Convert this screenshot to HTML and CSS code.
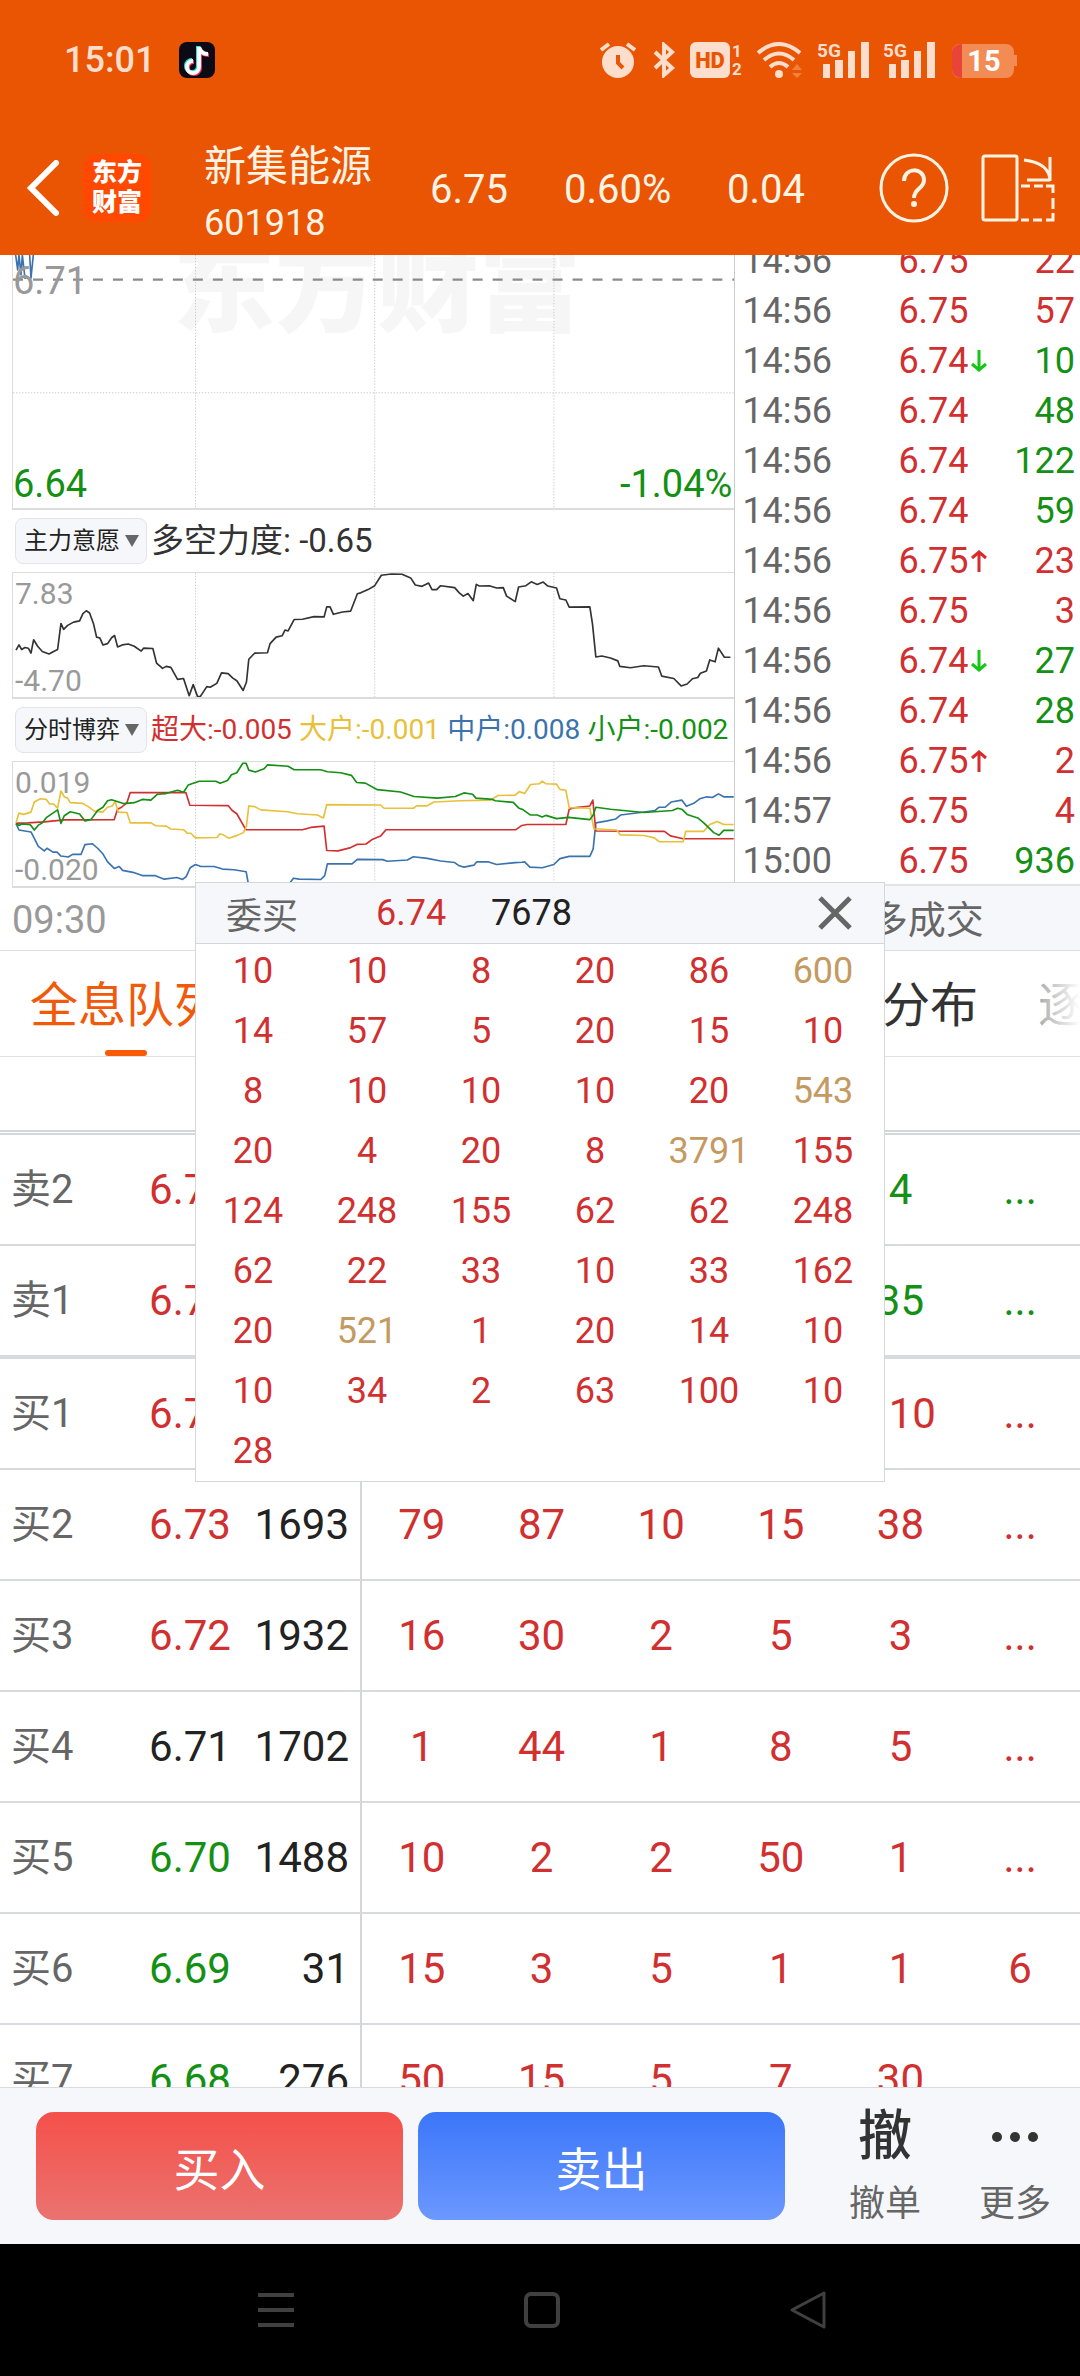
FILE: index.html
```
<!DOCTYPE html>
<html lang="zh">
<head>
    <meta charset="UTF-8">
    <meta name="viewport" content="width=device-width, initial-scale=1.0">
    <title>新集能源 601918</title>
    <link rel="stylesheet" href="styles.css">
</head>
<body>
    <header class="top">
        <div class="status-bar">
            <span class="clock">15:01</span>
            <svg class="app-icon" width="36" height="36" viewBox="0 0 36 36">
                <rect width="36" height="36" rx="8" fill="#0c0a14"/>
                <g fill="none" stroke-width="4">
                    <path d="M19 4v20a6 6 0 1 1-6-6M19 5c1 4 4 7 9 7" stroke="#25e5e0"/>
                    <path d="M21 6v20a6 6 0 1 1-6-6M21 7c1 4 4 6 9 6" stroke="#f3335b"/>
                    <path d="M20 5v20a6 6 0 1 1-6-6M20 5c1 4 4 7 9 7" stroke="#fff"/>
                </g>
            </svg>
            <div class="status-icons">
                <!-- 闹钟 -->
                <svg width="36" height="36" viewBox="0 0 36 36">
                    <circle cx="18" cy="20" r="16" fill="#fdddcb"/>
                    <path d="M1 8l8-6M35 8l-8-6" stroke="#fdddcb" stroke-width="4"/>
                    <path d="M18 13v8l5 5" fill="none" stroke="#ea5504" stroke-width="4"/>
                </svg>
                <!-- 蓝牙 -->
                <svg class="ml18" width="22" height="36" viewBox="0 0 22 36">
                    <path d="M2 10l17 16-8 7V3l8 7L2 26" fill="none" stroke="#fdddcb" stroke-width="4"/>
                </svg>
                <svg class="ml15" width="52" height="36" viewBox="0 0 52 36">
                    <rect width="40" height="36" rx="6" fill="#fdddcb"/>
                    <text x="20" y="26" text-anchor="middle" font-size="22" font-weight="900" fill="#ea5504">HD</text>
                    <text x="47" y="15" text-anchor="middle" font-size="17" font-weight="700" fill="#fdddcb">1</text>
                    <text x="47" y="33" text-anchor="middle" font-size="17" font-weight="700" fill="#fdddcb">2</text>
                </svg>
                <!-- 无线网 -->
                <svg class="ml15" width="46" height="36" viewBox="0 0 46 36">
                    <g fill="none" stroke="#fdddcb" stroke-width="4">
                        <path d="M1 11q21-18 42 0"/>
                        <path d="M7 18q15-13 30 0"/>
                        <path d="M13 25q9-8 18 0"/>
                    </g>
                    <circle cx="22" cy="32" r="4" fill="#fdddcb"/>
                    <path d="M35 28l5-6 5 6zM35 31l5 5 5-5z" fill="#f0823f"/>
                </svg>
                <svg class="ml13" width="52" height="36" viewBox="0 0 52 36">
                    <text x="0" y="15" font-size="19" font-weight="700" fill="#fdddcb">5G</text>
                    <path d="M6 22h7v14h-7zM18 18h8v18h-8zM31 9h7v27h-7zM44 0h8v36h-8z" fill="#fdddcb"/>
                </svg>
                <svg class="ml13" width="52" height="36" viewBox="0 0 52 36">
                    <text x="0" y="15" font-size="19" font-weight="700" fill="#fdddcb">5G</text>
                    <path d="M6 22h7v14h-7zM18 18h8v18h-8zM31 9h7v27h-7zM44 0h8v36h-8z" fill="#fdddcb"/>
                </svg>
                <!-- 电池 -->
                <svg class="ml18" width="66" height="36" viewBox="0 0 66 36">
                    <rect x="0" y="2" width="62" height="34" rx="8" fill="#f28b54"/>
                    <path d="M10 2a10 8 0 0 0-10 8v18a10 8 0 0 0 10 8z" fill="#ea4438"/>
                    <path d="M62 13h3v11h-3z" fill="#f28b54"/>
                    <text x="32" y="29" text-anchor="middle" font-size="29" font-weight="700" fill="#fff">15</text>
                </svg>
            </div>
        </div>
        <div class="stock-bar">
            <button class="icon-btn back" aria-label="返回">
                <svg width="32" height="56" viewBox="0 0 32 56"><path d="M29 3L4 28l25 25" fill="none" stroke="#fff" stroke-width="6" stroke-linecap="round"/></svg>
            </button>
            <div class="logo">东方<br>财富</div>
            <div class="stock-name">
                <h1>新集能源</h1>
                <p>601918</p>
            </div>
            <span class="quote">6.75</span>
            <span class="quote quote-rate">0.60%</span>
            <span class="quote quote-diff">0.04</span>
            <button class="icon-btn help" aria-label="帮助">
                <svg width="70" height="70" viewBox="0 0 70 70" fill="none" stroke="#fff3e4" stroke-width="3">
                    <circle cx="35" cy="35" r="33"/>
                    <path d="M25 28c0-14 20-14 20-1 0 9-10 8-10 18" stroke-width="4"/>
                    <circle cx="35" cy="51" r="3" fill="#fff3e4" stroke="none"/>
                </svg>
            </button>
            <button class="icon-btn rotate" aria-label="横屏">
                <svg width="74" height="68" viewBox="0 0 74 68" fill="none" stroke="#fff3e4" stroke-width="3">
                    <rect x="2" y="2" width="34" height="64" rx="2"/>
                    <path d="M43 6q25 3 26 20M69 3v24M46 26h23"/>
                    <path d="M40 32h9M53 32h9M65 32h7v7M72 44v11M72 59v7h-7M61 66h-9M48 66h-8"/>
                </svg>
            </button>
        </div>
    </header>

    <main class="content">
        <section class="market">
            <div class="charts">
                <div class="chart chart-price">
                    <span class="watermark">东方财富</span>
                    <svg viewBox="36 15 2166 762" preserveAspectRatio="none">
                        <g class="grid">
                            <path d="M584 15V777M1122 15V777M1660 15V777M36 430H2202"/>
                        </g>
                        <path class="line blue" d="M44 15L50 60L54 15L60 75L64 15L72 85L76 85M86 15L90 85L97 15"/>
                        <path class="prev-close" d="M36 89H2202"/>
                    </svg>
                    <span class="axis axis-prev">6.71</span>
                    <span class="axis axis-low green">6.64</span>
                    <span class="axis axis-rate green">-1.04%</span>
                </div>
                <div class="indicator">
                    <label class="picker">
                        <select aria-label="指标一"><option>主力意愿</option></select>
                    </label>
                    <span class="power">多空力度: -0.65</span>
                </div>
                <div class="chart chart-sub">
                    <svg viewBox="36 33 2166 381" preserveAspectRatio="none">
                        <g class="grid"><path d="M584 33V414M1122 33V414M1660 33V414"/></g>
                        <polyline class="line black" points="45,270 54,254 62,268 72,262 82,264 90,279 98,238 110,258 124,274 144,282 158,274 170,268 180,188 188,206 200,194 218,184 236,180 246,158 256,149 266,156 278,190 287,230 297,233 306,254 320,250 332,232 341,225 350,260 364,254 382,251 400,258 421,273 428,264 456,265 467,310 485,326 496,320 510,323 530,360 548,357 565,410 577,376 590,412 598,413 618,382 628,384 648,372 662,340 682,342 696,356 708,364 727,394 737,368 744,298 762,279 800,278 808,250 826,230 844,226 853,208 862,211 880,176 905,175 940,167 970,168 978,137 988,137 998,160 1025,153 1050,150 1070,97 1080,94 1102,84 1122,72 1142,40 1172,36 1204,37 1230,48 1244,70 1264,74 1284,64 1294,84 1308,84 1320,72 1362,78 1376,94 1388,104 1402,96 1418,118 1427,68 1436,73 1466,72 1488,79 1508,78 1518,104 1544,121 1554,76 1576,72 1592,60 1610,68 1628,61 1642,73 1668,79 1678,112 1696,116 1706,138 1768,137 1776,190 1786,291 1804,288 1830,294 1852,303 1858,320 1890,324 1930,318 1974,322 1984,350 2020,357 2042,380 2060,374 2076,358 2092,354 2100,341 2118,334 2128,300 2144,306 2154,264 2172,292 2190,292"/>
                    </svg>
                    <span class="axis-small axis-max">7.83</span>
                    <span class="axis-small axis-min">-4.70</span>
                </div>
                <div class="indicator">
                    <label class="picker">
                        <select aria-label="指标二"><option>分时博弈</option></select>
                    </label>
                    <div class="legend">
                        <span class="red">超大:-0.005</span>
                        <span class="yellow">大户:-0.001</span>
                        <span class="blue">中户:0.008</span>
                        <span class="green">小户:-0.002</span>
                    </div>
                </div>
                <div class="chart chart-sub">
                    <svg viewBox="36 603 2166 381" preserveAspectRatio="none">
                        <g class="grid"><path d="M584 603V984M1122 603V984M1660 603V984"/></g>
                        <polyline class="line blue" points="45,792 54,812 90,818 100,838 112,862 130,876 138,868 156,880 168,880 180,892 202,895 215,887 240,887 252,857 274,854 290,868 305,884 320,910 340,930 355,924 365,936 396,942 424,952 462,952 490,963 528,958 545,964 556,955 568,928 584,918 600,924 640,924 665,932 700,934 736,940 744,985 860,985 878,960 895,963 960,964 972,952 980,916 1054,916 1070,902 1146,903 1160,908 1220,904 1238,894 1280,899 1320,907 1362,912 1376,922 1390,926 1420,920 1428,910 1464,910 1488,918 1544,912 1564,911 1572,910 1588,926 1625,928 1660,918 1678,900 1706,893 1768,893 1778,870 1786,790 1820,784 1846,778 1860,766 1920,758 1964,752 1976,742 1994,742 2012,726 2044,720 2058,739 2080,730 2100,715 2120,710 2136,712 2154,701 2170,710 2200,710"/>
                        <polyline class="line red" points="45,791 80,790 130,787 190,781 340,780 350,748 362,742 378,728 388,697 555,697 567,736 682,737 694,752 708,762 735,811 905,811 930,804 970,800 978,875 1012,876 1050,866 1070,856 1096,855 1116,840 1140,830 1156,811 1546,811 1564,798 1580,795 1696,795 1706,748 1720,744 1768,738 1777,720 1786,815 1992,816 2010,830 2048,839 2200,839"/>
                        <polyline class="line yellow" points="45,790 54,760 68,764 90,757 100,726 118,716 136,718 146,732 158,732 170,745 180,692 190,710 200,714 208,728 245,730 262,740 280,754 305,757 320,742 334,738 343,724 352,757 378,758 388,790 450,790 465,799 496,800 510,809 548,811 560,822 570,822 584,836 648,835 657,824 666,826 684,837 705,830 728,820 737,800 744,738 762,740 780,750 860,756 890,762 950,766 968,775 978,734 1140,735 1150,745 1238,745 1248,738 1278,738 1300,726 1380,722 1470,720 1492,706 1544,705 1556,694 1572,700 1590,672 1616,670 1625,662 1636,670 1668,671 1678,687 1696,690 1706,743 1768,745 1780,808 1848,812 1860,827 1930,829 1962,836 1976,848 2048,848 2056,816 2110,816 2128,795 2150,786 2170,795 2200,795"/>
                        <polyline class="line green" points="45,792 54,798 64,793 88,796 100,812 112,797 124,790 136,774 170,750 180,792 190,768 208,756 236,763 252,784 270,780 290,752 306,742 320,722 332,719 370,731 400,728 424,718 450,720 470,702 495,700 530,690 548,696 562,674 595,662 645,662 658,668 680,660 692,642 708,636 726,607 736,607 744,628 764,634 790,624 800,612 862,616 880,627 960,627 980,633 1020,636 1052,644 1068,666 1094,668 1130,688 1200,695 1240,709 1310,714 1364,709 1390,698 1416,702 1426,714 1476,718 1484,722 1538,727 1554,744 1568,750 1590,766 1610,766 1625,772 1636,767 1668,777 1704,773 1768,780 1778,766 1786,742 1830,748 1930,758 2016,752 2032,745 2044,748 2060,764 2092,775 2110,790 2140,820 2156,828 2170,813 2200,813"/>
                    </svg>
                    <span class="axis-small axis-max">0.019</span>
                    <span class="axis-small axis-min">-0.020</span>
                </div>
                <div class="time-axis">09:30</div>
            </div>
            <div class="ticks">
                <ul id="tickList" class="tick-list"></ul>
                <button class="more-ticks">更多成交</button>
            </div>
        </section>

        <nav class="tabs">
            <button class="tab active">全息队列</button>
            <button class="tab">千档盘口</button>
            <button class="tab">大单统计</button>
            <button class="tab">价格分布</button>
            <button class="tab">逐笔委托</button>
        </nav>

        <div class="queue-head"></div>
        <table class="orders">
            <tbody id="orderBody"></tbody>
        </table>

        <!-- 委托队列弹窗 -->
        <div class="popup">
            <div class="popup-head">
                <span class="popup-side">委买</span>
                <span class="popup-price">6.74</span>
                <span class="popup-total">7678</span>
                <button class="icon-btn popup-close" aria-label="关闭">
                    <svg width="34" height="34" viewBox="0 0 34 34"><path d="M2 2l30 30M32 2L2 32" stroke="#666" stroke-width="5"/></svg>
                </button>
            </div>
            <div id="popupGrid" class="popup-grid"></div>
        </div>
    </main>

    <footer class="trade-bar">
        <button class="trade buy">买入</button>
        <button class="trade sell">卖出</button>
        <button class="tool"><span class="tool-icon">撤</span>撤单</button>
        <button class="tool">
            <span class="tool-icon">
                <svg width="48" height="10" viewBox="0 0 48 10" fill="#333"><circle cx="6" cy="5" r="5"/><circle cx="24" cy="5" r="5"/><circle cx="42" cy="5" r="5"/></svg>
            </span>更多
        </button>
    </footer>
    <div class="system-nav">
        <svg width="38" height="40" viewBox="0 0 38 40"><path d="M1 5h36M1 20h36M1 35h36" stroke="#404040" stroke-width="4"/></svg>
        <svg width="38" height="40" viewBox="0 0 38 40"><rect x="3" y="4" width="32" height="32" rx="5" fill="none" stroke="#404040" stroke-width="4"/></svg>
        <svg width="38" height="40" viewBox="0 0 38 40"><path d="M35 3v34L3 20z" fill="none" stroke="#404040" stroke-width="3" stroke-linejoin="round"/></svg>
    </div>

    <script>
        // 分时成交: 时间, 价格, 手数, 手数颜色, 箭头
        const ticks = [
            ['14:56', '6.75', 22, 'red'],
            ['14:56', '6.75', 57, 'red'],
            ['14:56', '6.74', 10, 'green', 'down'],
            ['14:56', '6.74', 48, 'green'],
            ['14:56', '6.74', 122, 'green'],
            ['14:56', '6.74', 59, 'green'],
            ['14:56', '6.75', 23, 'red', 'up'],
            ['14:56', '6.75', 3, 'red'],
            ['14:56', '6.74', 27, 'green', 'down'],
            ['14:56', '6.74', 28, 'green'],
            ['14:56', '6.75', 2, 'red', 'up'],
            ['14:57', '6.75', 4, 'red'],
            ['15:00', '6.75', 936, 'green']
        ];
        const arrows = {
            up: '<svg width="16" height="22" viewBox="0 0 16 22"><path d="M8 22V2M1 8l7-6 7 6" fill="none" stroke="#d92b2b" stroke-width="3"/></svg>',
            down: '<svg width="16" height="22" viewBox="0 0 16 22"><path d="M8 0v20M1 14l7 6 7-6" fill="none" stroke="#12c812" stroke-width="3"/></svg>'
        };
        document.getElementById('tickList').innerHTML = ticks.map(t =>
            `<li><span class="tick-time">${t[0]}</span><span class="tick-price red">${t[1]}${arrows[t[4]] || ''}</span><span class="tick-vol ${t[3]}">${t[2]}</span></li>`
        ).join('');

        // 盘口: 档位, 价格, 价格颜色, 总量, 队列
        const orders = [
            ['卖2', '6.76', 'red', 1204, ['20', '15', '8', '30', '4', '...']],
            ['卖1', '6.75', 'red', 2310, ['12', '50', '6', '10', '35', '...']],
            ['买1', '6.74', 'red', 7678, ['10', '10', '8', '20', '110', '...']],
            ['买2', '6.73', 'red', 1693, ['79', '87', '10', '15', '38', '...']],
            ['买3', '6.72', 'red', 1932, ['16', '30', '2', '5', '3', '...']],
            ['买4', '6.71', 'dark', 1702, ['1', '44', '1', '8', '5', '...']],
            ['买5', '6.70', 'green', 1488, ['10', '2', '2', '50', '1', '...']],
            ['买6', '6.69', 'green', 31, ['15', '3', '5', '1', '1', '6']],
            ['买7', '6.68', 'green', 276, ['50', '15', '5', '7', '30', '']]
        ];
        document.getElementById('orderBody').innerHTML = orders.map(o => {
            const side = o[0][0] === '卖' ? 'green' : 'red';
            const cells = o[4].map(n => `<td class="${side}">${n}</td>`).join('');
            return `<tr class="${o[0] === '卖1' ? 'split' : ''}"><th>${o[0]}</th><td class="price ${o[2]}">${o[1]}</td><td class="total">${o[3]}</td>${cells}</tr>`;
        }).join('');

        const queue = [
            10, 10, 8, 20, 86, 600,
            14, 57, 5, 20, 15, 10,
            8, 10, 10, 10, 20, 543,
            20, 4, 20, 8, 3791, 155,
            124, 248, 155, 62, 62, 248,
            62, 22, 33, 10, 33, 162,
            20, 521, 1, 20, 14, 10,
            10, 34, 2, 63, 100, 10,
            28
        ];
        // 500手以上为大单
        document.getElementById('popupGrid').innerHTML = queue.map(n =>
            `<span class="${n > 500 ? 'big' : ''}">${n}</span>`
        ).join('');
    </script>
</body>
</html>
```
FILE: styles.css
```
* {
    box-sizing: border-box;
    margin: 0;
    padding: 0;
}

body {
    display: flex;
    flex-direction: column;
    height: 100vh;
    overflow: hidden;
    background: #fff;
    color: #222;
    font-family: Roboto, "Noto Sans CJK SC", sans-serif;
}

button, select {
    font-family: inherit;
    border: none;
    background: none;
    cursor: pointer;
}

svg {
    display: block;
    flex: none;
}

.red { color: #d13030; stroke: #d13030; }
.green { color: #149014; stroke: #149014; }
.blue { color: #3b73af; stroke: #3b73af; }
.yellow { color: #e8c03a; stroke: #e8c03a; }
.black { stroke: #333; }
.dark { color: #222; }

/* 顶部 */
.top {
    flex: none;
    background: #ea5504;
    color: #fff3e4;
}

.status-bar {
    display: flex;
    align-items: center;
    height: 120px;
    padding: 0 62px 0 64px;
}

.clock {
    width: 115px;
    font-size: 36px;
    font-weight: 500;
    color: #fdddcb;
}

.status-icons {
    display: flex;
    margin-left: auto;
}

.ml13 { margin-left: 14px; }
.ml15 { margin-left: 15px; }
.ml18 { margin-left: 17px; }

.stock-bar {
    display: flex;
    align-items: center;
    height: 135px;
    padding: 0 25px 0 27px;
}

.icon-btn {
    flex: none;
}

.logo {
    width: 68px;
    height: 68px;
    margin-left: 24px;
    padding-top: 4px;
    border-radius: 14px;
    background: #ff4800;
    color: #fff;
    font-size: 25px;
    font-weight: 900;
    line-height: 30px;
    text-align: center;
}

.stock-name {
    width: 226px;
    margin-left: 53px;
    padding-top: 14px;
}

.stock-name h1 {
    font-size: 42px;
    font-weight: 400;
    line-height: 56px;
}

.stock-name p {
    font-size: 36px;
    line-height: 56px;
}

.quote {
    width: 134px;
    padding-top: 4px;
    font-size: 40px;
}

.quote-rate { width: 163px; }
.quote-diff { width: 152px; }

.rotate {
    margin-left: auto;
}

/* 行情区 */
.content {
    position: relative;
    flex: 1;
    min-height: 0;
    overflow: hidden;
}

.market {
    display: grid;
    grid-template-columns: 68fr 32fr;
    border-bottom: 1px solid #dcdfe2;
}

.charts {
    display: flex;
    flex-direction: column;
    min-width: 0;
}

.chart {
    position: relative;
    margin-left: 12px;
    border: 1px solid #dcdcdc;
    border-width: 1px 0 2px 1px;
    overflow: hidden;
}

.chart svg {
    position: relative;
    width: 100%;
    height: 100%;
}

.chart-price {
    height: 255px;
    border-top: none;
}

.chart-sub {
    height: 127px;
}

.line {
    fill: none;
    stroke-width: 5;
    stroke-linejoin: round;
}

.grid {
    stroke: #ccc;
    stroke-width: 3;
    stroke-dasharray: 4 5;
}

.prev-close {
    stroke: #8a8a8a;
    stroke-width: 7;
    stroke-dasharray: 30 30;
}

.watermark {
    position: absolute;
    left: 160px;
    bottom: 168px;
    font-size: 102px;
    font-weight: 900;
    line-height: 102px;
    color: #f6f6f6;
    white-space: nowrap;
}

.axis, .axis-small {
    position: absolute;
    left: 0;
    font-size: 38px;
    line-height: 44px;
}

.axis-prev {
    top: 4px;
    color: #999;
}

.axis-low { bottom: 2px; }

.axis-rate {
    left: auto;
    right: 2px;
    bottom: 2px;
}

.axis-small {
    left: 2px;
    font-size: 30px;
    line-height: 36px;
    color: #999;
}

.axis-max { top: 3px; }
.axis-min { bottom: -2px; }

.indicator {
    display: flex;
    align-items: center;
    gap: 4px;
    height: 62px;
    padding: 0 6px 0 15px;
}

.picker {
    position: relative;
    flex: none;
}

.picker::after {
    content: "";
    position: absolute;
    right: 8px;
    top: 17px;
    border: 7px solid transparent;
    border-top: 12px solid #666;
    border-bottom: none;
    pointer-events: none;
}

.picker select {
    appearance: none;
    display: block;
    width: 132px;
    height: 46px;
    padding-left: 8px;
    border: 1px solid #e2e4e8;
    border-radius: 8px;
    background: #f6f7fa;
    color: #222;
    font-size: 24px;
}

.power {
    font-size: 33px;
    line-height: 46px;
    color: #333;
}

.legend {
    flex: 1;
    display: flex;
    justify-content: space-between;
    font-size: 28px;
    line-height: 46px;
    white-space: nowrap;
}

.time-axis {
    height: 62px;
    padding-left: 12px;
    font-size: 38px;
    line-height: 64px;
    color: #999;
}

.ticks {
    display: flex;
    flex-direction: column;
    border-left: 1px solid #ccc;
    min-height: 0;
    height: 695px;
}

.tick-list {
    flex: 1;
    display: flex;
    flex-direction: column;
    justify-content: flex-end;
    gap: 4px;
    min-height: 0;
    overflow: hidden;
    padding: 0 5px 0 7px;
    list-style: none;
    font-size: 36px;
    line-height: 46px;
}

.tick-list li {
    flex: none;
    display: flex;
}

.tick-time {
    width: 156px;
    color: #666;
}

.tick-price {
    display: flex;
    align-items: center;
    gap: 2px;
}

.tick-vol {
    margin-left: auto;
}

.more-ticks {
    flex: none;
    height: 66px;
    padding-bottom: 4px;
    border-top: 2px solid #e2e4e8;
    background: #f6f7fa;
    color: #666;
    font-size: 38px;
}

/* 标签栏 */
.tabs {
    position: relative;
    display: flex;
    gap: 60px;
    height: 106px;
    padding-left: 30px;
    border-bottom: 1px solid #e0e2e4;
    overflow: hidden;
}

/* 右侧渐隐 */
.tabs::after {
    content: "";
    position: absolute;
    top: 0;
    right: 0;
    width: 100px;
    height: 105px;
    background: linear-gradient(to right, rgba(255, 255, 255, 0), #fff);
}

.tab {
    position: relative;
    flex: none;
    height: 105px;
    padding-top: 5px;
    color: #333;
    font-size: 48px;
    line-height: 100px;
}

.tab.active {
    color: #f05a0a;
}

.tab.active::after {
    content: "";
    position: absolute;
    left: 50%;
    bottom: 0;
    width: 42px;
    height: 6px;
    margin-left: -21px;
    border-radius: 3px;
    background: #f95a06;
}

.queue-head {
    height: 78px;
    border-bottom: 5px double #d4d7da;
}

/* 盘口 */
.orders {
    width: 100%;
    table-layout: fixed;
    border-spacing: 0;
    font-size: 42px;
    line-height: 109px;
    text-align: center;
}

.orders th, .orders td {
    height: 111px;
    border-bottom: 2px solid #d8dbde;
}

.orders th {
    width: 140px;
    padding-left: 11px;
    color: #666;
    font-size: 40px;
    font-weight: 400;
    text-align: left;
}

.orders .price {
    width: 100px;
}

.orders .total {
    width: 122px;
    padding-right: 11px;
    border-right: 2px solid #d4d7da;
    text-align: right;
}

.orders .split th, .orders .split td {
    height: 113px;
    border-bottom-width: 4px;
}

/* 弹窗 */
.popup {
    position: absolute;
    top: 627px;
    left: 195px;
    right: 195px;
    border: 1px solid #d4d7da;
    background: #fff;
    font-size: 36px;
}

.popup-head {
    display: flex;
    align-items: center;
    height: 61px;
    padding: 0 32px 0 30px;
    border-bottom: 1px solid #d4d7da;
    background: #f6f7fa;
}

.popup-side {
    width: 150px;
    color: #666;
}

.popup-price {
    width: 115px;
    color: #d13030;
}

.popup-close {
    margin-left: auto;
}

.popup-grid {
    display: grid;
    grid-template-columns: repeat(6, 1fr);
    row-gap: 6px;
    padding: 0 4px 3px 0;
    color: #d13030;
    line-height: 54px;
    text-align: center;
}

.popup-grid .big {
    color: #c49a62;
}

/* 底部 */
.trade-bar {
    flex: none;
    display: flex;
    align-items: center;
    height: 157px;
    padding: 0 0 0 36px;
    border-top: 1px solid #d8dbde;
    background: #f6f7fa;
}

.trade {
    flex: 367;
    height: 108px;
    margin-right: 15px;
    border-radius: 18px;
    color: #fff;
    font-size: 46px;
}

.buy { background: linear-gradient(#f5504a, #ea736f); }
.sell { background: linear-gradient(#3b76f9, #6c98ff); }

.tool {
    flex: 130;
    padding-top: 8px;
    color: #666;
    font-size: 36px;
    line-height: 66px;
}

.tool:nth-of-type(3) {
    margin-left: 20px;
}

.tool-icon {
    display: flex;
    align-items: center;
    justify-content: center;
    height: 68px;
    color: #333;
    font-size: 54px;
    font-weight: 500;
}

.system-nav {
    flex: none;
    display: flex;
    justify-content: space-between;
    align-items: center;
    height: 132px;
    padding: 0 253px 0 257px;
    background: #000;
}
```
